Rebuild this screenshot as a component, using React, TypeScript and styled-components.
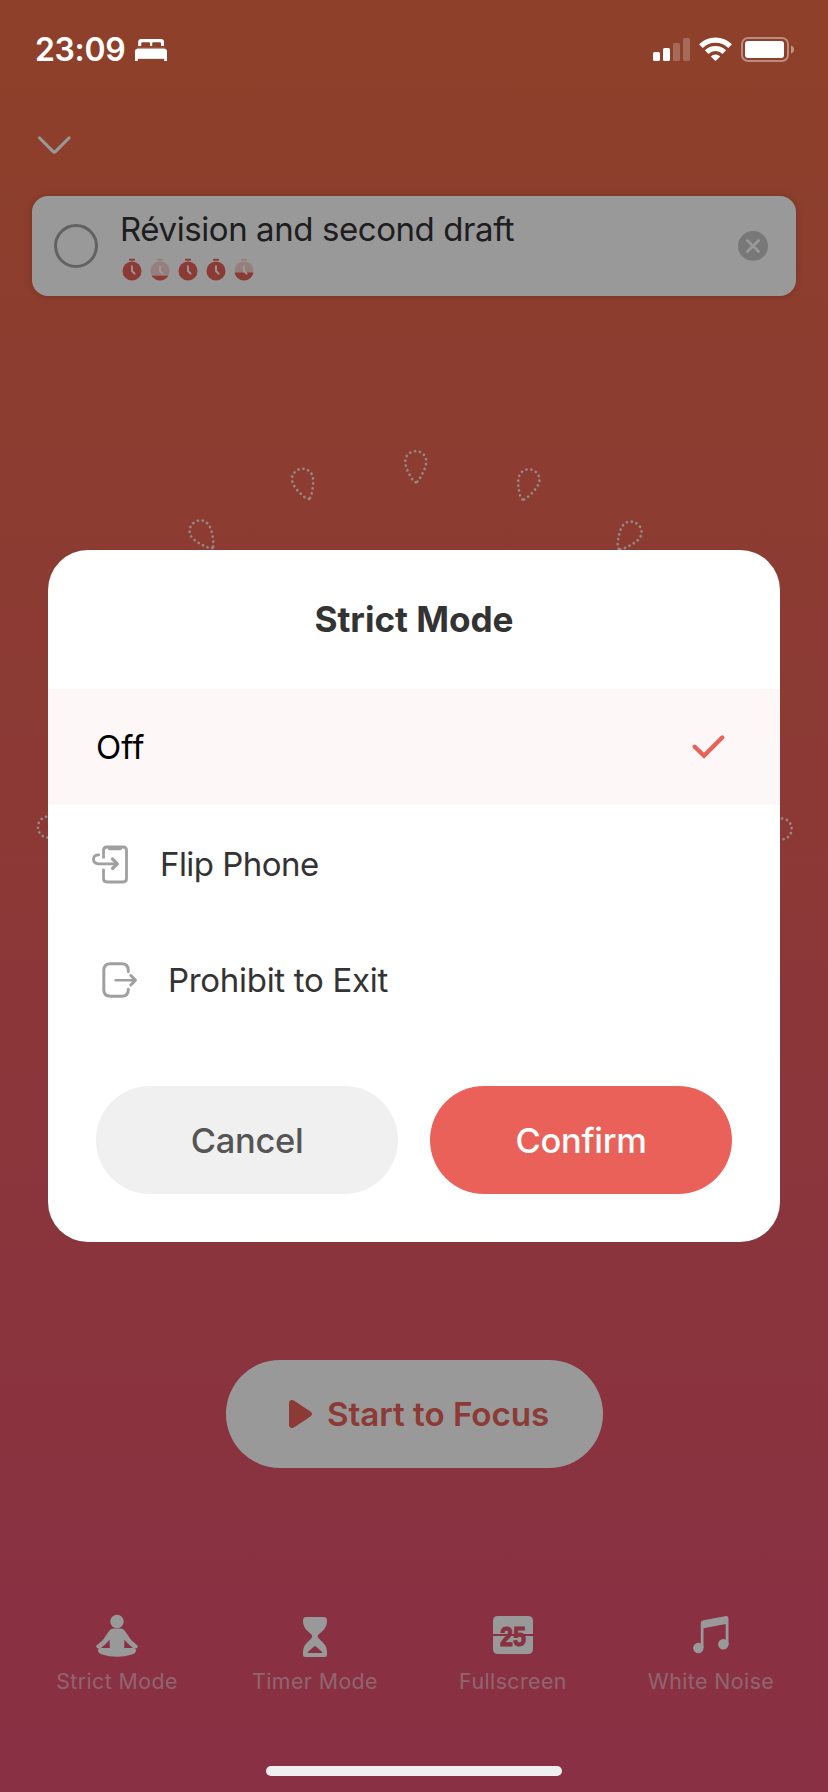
import React from 'react';
import styled, { createGlobalStyle } from 'styled-components';

const GlobalStyle = createGlobalStyle`
  *, *::before, *::after { box-sizing: border-box; }
  body { margin: 0; background: #8e412a; }
  svg { display: block; flex: none; }
  button { border: 0; padding: 0; margin: 0; font: inherit; }
`;

const Screen = styled.div`
  position: relative;
  display: flex;
  flex-direction: column;
  width: 828px;
  height: 1792px;
  overflow: hidden;
  font-family: Inter, Roboto, sans-serif;
  background: linear-gradient(180deg, #ed6c46 0%, #e45073 100%);
`;

/* Status bar and home indicator stay above the dimming layer. */
const StatusBar = styled.header`
  position: relative;
  z-index: 3;
  display: flex;
  align-items: center;
  height: 99px;
  padding: 0 34px 0 35px;
  color: #fff;
`;

const Time = styled.span`
  width: 100px;
  padding-top: 1px;
  font-size: 32px;
  font-weight: 600;
  line-height: 38px;
  letter-spacing: -0.35px;
  white-space: nowrap;
`;

const StatusRight = styled.div`
  display: flex;
  align-items: center;
  gap: 9px;
  margin-left: auto;
`;

const NavRow = styled.nav`
  display: flex;
  height: 97px;
  padding: 36px 0 0 36px;
`;

const TaskCard = styled.section`
  display: flex;
  align-items: center;
  height: 100px;
  margin: 0 32px;
  padding: 0 28px 0 22px;
  border-radius: 16px;
  background: #fff;
  box-shadow: 0 0 8px rgba(0, 0, 0, 0.18);
`;

const TaskRing = styled.span`
  width: 44px;
  height: 44px;
  border: 3px solid #a3a3a3;
  border-radius: 50%;
`;

const TaskBody = styled.div`
  flex: 1;
  display: flex;
  flex-direction: column;
  gap: 9px;
  margin-left: 22px;
  padding-bottom: 2px;
`;

const TaskTitle = styled.h1`
  margin: 0;
  color: #333;
  font-size: 33px;
  font-weight: 400;
  line-height: 40px;
  letter-spacing: -0.42px;
  white-space: nowrap;
`;

const TimerRow = styled.div`
  display: flex;
  gap: 8px;
  padding-left: 2px;
`;

const Dial = styled.svg`
  width: 828px;
  height: 776px;
  margin-top: 144px;
`;

const StartButton = styled.button`
  display: flex;
  align-items: center;
  gap: 14.5px;
  align-self: center;
  width: 377px;
  height: 108px;
  margin-top: 144px;
  padding-left: 63px;
  border-radius: 54px;
  background: #fff;
  color: #ea6159;
  font-size: 33.2px;
  font-weight: 600;
  letter-spacing: -0.05px;
  white-space: nowrap;
`;

const TabBar = styled.nav`
  display: grid;
  grid-template-columns: repeat(4, 198px);
  justify-content: center;
  margin-top: 144px;
`;

const Tab = styled.div`
  display: flex;
  flex-direction: column;
  align-items: center;
  gap: 10px;
`;

const TabLabel = styled.span`
  color: rgba(255, 255, 255, 0.5);
  font-size: 21.3px;
  font-weight: 400;
  line-height: 26px;
  letter-spacing: 0.45px;
  white-space: nowrap;
`;

const HomeIndicator = styled.div`
  position: relative;
  z-index: 3;
  align-self: center;
  width: 296px;
  height: 10px;
  margin: auto 0 16px;
  border-radius: 5px;
  background: #efefef;
`;

const Overlay = styled.div`
  position: absolute;
  inset: 0;
  z-index: 2;
  display: flex;
  align-items: center;
  justify-content: center;
  background: rgba(0, 0, 0, 0.4);
`;

const Dialog = styled.section`
  display: flex;
  flex-direction: column;
  width: 732px;
  height: 692px;
  border-radius: 40px;
  background: #fff;
  overflow: hidden;
`;

const DialogTitle = styled.h2`
  margin: 0;
  height: 139px;
  line-height: 139px;
  color: #333;
  font-size: 35.2px;
  font-weight: 700;
  text-align: center;
  letter-spacing: -0.05px;
`;

const Option = styled.div<{ $selected?: boolean; $indent: number; $gap?: number }>`
  display: flex;
  align-items: center;
  gap: ${(p) => p.$gap ?? 0}px;
  height: 116px;
  padding: ${(p) => (p.$selected ? 0 : 2)}px 55px 0 ${(p) => p.$indent}px;
  background: ${(p) => (p.$selected ? '#fdf7f7' : '#fff')};
  color: ${(p) => (p.$selected ? '#000' : '#333')};
`;

const OptionLabel = styled.span<{ $track?: number }>`
  flex: 1;
  font-size: 33px;
  line-height: 40px;
  letter-spacing: ${(p) => p.$track ?? 0}px;
  white-space: nowrap;
`;

const Actions = styled.div`
  display: grid;
  grid-template-columns: 1fr 1fr;
  gap: 32px;
  margin-top: auto;
  padding: 0 48px 48px;
`;

const ActionButton = styled.button<{ $primary?: boolean }>`
  height: 108px;
  border-radius: 54px;
  background: ${(p) => (p.$primary ? '#ea6159' : '#f0f0f0')};
  color: ${(p) => (p.$primary ? '#fff' : '#555')};
  font-size: 34.5px;
  font-weight: 500;
  letter-spacing: -0.3px;
`;

const BedIcon = () => (
  <svg width="32" height="22" viewBox="135 39 32 22" fill="#fff">
    <path d="M138.200 46V42Q138.200 39 141.200 39H161Q164 39 164 42V46H161V43.500Q161 42.300 159.800 42.300H153.300Q152.200 42.300 152.200 43.500V46H150V43.500Q150 42.300 148.900 42.300H142.400Q141.200 42.300 141.200 43.500V46Z" />
    <path d="M135 61V51.500Q135 48.800 137.700 48.800H164.300Q167 48.800 167 51.500V61H164.200V58.800H137.800V61Z" />
    <path d="M137 47.700H165V48.800H137ZM137.800 58H164.200V59H137.800Z" opacity=".4" />
  </svg>
);

const SignalIcon = () => (
  <svg width="37" height="25" viewBox="653 37 37 25" fill="#fff">
    <rect x="653" y="52" width="7" height="9" rx="1.600" />
    <rect x="663" y="48" width="7" height="13" rx="1.600" />
    <rect x="673" y="43" width="7" height="18" rx="1.600" opacity=".22" />
    <rect x="683" y="38" width="7" height="23" rx="1.600" opacity=".22" />
  </svg>
);

const WifiIcon = () => (
  <svg width="33" height="25" viewBox="-16.500 -24 33 25">
    <g fill="none" stroke="#fff" strokeWidth="5.200">
      <path d="M-14.600 -14.800A20.800 20.800 0 0 1 14.600 -14.800" />
      <path d="M-8.800 -8.900A12.500 12.500 0 0 1 8.800 -8.900" />
    </g>
    <path d="M-4.700 -4.500A6.500 6.500 0 0 1 4.700 -4.500L.6 -.4Q0 .1 -.6 -.4Z" fill="#fff" />
  </svg>
);

const BatteryIcon = () => (
  <svg width="53" height="25" viewBox="741 37 53 25">
    <rect x="742" y="38" width="46" height="23" rx="6" fill="none" stroke="#fff" strokeOpacity=".4" strokeWidth="2" />
    <rect x="745" y="41" width="39" height="17" rx="3" fill="#fff" />
    <path d="M791 45.500Q794 46.500 794 49.500T791 53.500Z" fill="#fff" opacity=".45" />
  </svg>
);

const ChevronDown = () => (
  <svg width="36" height="21" viewBox="0 0 36 21" fill="none" stroke="#fff" strokeWidth="3" strokeLinecap="round" strokeLinejoin="round">
    <path d="M3.400 2.800L17.200 16.600Q18.300 17.600 19.400 16.600L33.200 2.800" />
  </svg>
);

/* A stopwatch filled from the bottom up to `level` (0..1). */
const TimerIcon = ({ level, id }: { level: number; id: string }) => (
  <svg width="20" height="23" viewBox="0 0 20 23">
    <defs>
      <clipPath id={id}>
        <rect x="0" y={22.5 - 19 * level} width="20" height="22" />
      </clipPath>
    </defs>
    <g fill={level === 1 ? '#ea6159' : '#f8d2cf'}>
      <rect x="7" y=".7" width="6" height="2" rx=".6" />
      <circle cx="10" cy="13" r="9.500" />
    </g>
    {level < 1 && <circle cx="10" cy="13" r="9.500" fill="#ea6159" clipPath={`url(#${id})`} />}
    <path d="M10 8.200V13L12.600 15.700" fill="none" stroke="#fff" strokeWidth="1.900" strokeLinecap="round" strokeLinejoin="round" />
  </svg>
);

const ClearIcon = () => (
  <svg width="30" height="30" viewBox="0 0 30 30">
    <circle cx="15" cy="15" r="15" fill="#c8c8c8" />
    <path d="M9.400 9.400L20.600 20.600M20.600 9.400L9.400 20.600" stroke="#fff" strokeWidth="2.800" strokeLinecap="round" />
  </svg>
);

const PlayIcon = () => (
  <svg width="24" height="28" viewBox="0 0 24 28" fill="#ea6159">
    <path d="M0 3.400Q0 0 3 0Q4.300 0 5.300 .7L21 11.200Q23 12.500 23 14T21 16.800L5.300 27.300Q4.300 28 3 28Q0 28 0 24.600Z" />
  </svg>
);

const CheckIcon = () => (
  <svg width="33" height="24" viewBox="0 0 33 24" fill="none" stroke="#ea6159" strokeWidth="4.300" strokeLinecap="round" strokeLinejoin="miter">
    <path d="M2.700 11.800L12 20.800L30.200 2.500" />
  </svg>
);

const FlipIcon = () => (
  <svg width="37" height="39" viewBox="92 844.500 37 39" fill="none" stroke="#a0a0a0" strokeWidth="2.800" strokeLinecap="round" strokeLinejoin="round">
    <path d="M103.500 858V850Q103.500 846.500 107 846.500H123Q126.500 846.500 126.500 850V878Q126.500 881.500 123 881.500H107Q103.500 881.500 103.500 878V868.200" strokeLinecap="butt" />
    <path d="M107 847H122.500Q122 849.800 120 849.800H110Q107.800 849.800 107.300 847Z" fill="#a0a0a0" stroke="none" />
    <path d="M98.800 854.300C95.200 854.300 93.500 855.800 93.500 858.600C93.500 861.800 95 863.300 98.500 863.300H117" />
    <path d="M112.500 858.500L117.300 863.300L112.500 868" strokeWidth="3.200" />
  </svg>
);

const ExitIcon = () => (
  <svg width="36" height="37" viewBox="102 962 36 37" fill="none" stroke="#a0a0a0" strokeWidth="3" strokeLinecap="round" strokeLinejoin="round">
    <path d="M128.300 971.500V970.500Q128.300 963.800 121.500 963.800H110.500Q103.800 963.800 103.800 970.500V989.500Q103.800 996.200 110.500 996.200H121.500Q128.300 996.200 128.300 989.700V989.200" />
    <path d="M115.700 980.200H134.500" strokeWidth="2.600" />
    <path d="M130.800 975.500L135.500 980.200L130.800 985" />
  </svg>
);

const MeditateIcon = () => (
  <svg width="42" height="46" viewBox="96 1612 42 46" fill="#fff">
    <circle cx="117" cy="1621.500" r="6.700" />
    <path
      fillRule="evenodd"
      d="M113.500 1628.600H120.500Q123 1628.600 124.800 1630.800L130.600 1639.200Q132 1641 134 1642.500L137 1645Q138.300 1646.300 137.400 1647.500Q136.500 1648.700 134.900 1648.200Q136.300 1649.300 136 1651Q135.700 1653.200 132.500 1654.300Q125 1656.800 117 1656.800T101.500 1654.300Q98.300 1653.200 98 1651Q97.700 1649.300 99.100 1648.200Q97.500 1648.700 96.600 1647.500Q95.700 1646.300 97 1645L100 1642.500Q102 1641 103.400 1639.200L109.200 1630.800Q111 1628.600 113.500 1628.600Z
         M109.500 1639.500L108 1641.400Q106.500 1643.300 104.500 1645L101 1648H109.800Z
         M124.500 1639.500L126 1641.400Q127.500 1643.300 129.500 1645L133 1648H124.200Z"
    />
  </svg>
);

const HourglassIcon = () => (
  <svg width="24" height="46" viewBox="303 1612 24 46" fill="#fff">
    <path
      fillRule="evenodd"
      d="M306 1617H324Q327 1617 327 1620.500Q327 1627 322.500 1631L318.500 1634.600Q316.800 1636.500 318.800 1638.500L322.800 1642.500Q327 1646.500 327 1652V1654.500Q327 1657 324.500 1657H305.500Q303 1657 303 1654.500V1652Q303 1646.500 307.200 1642.500L311.200 1638.500Q313.200 1636.500 311.500 1634.600L307.500 1631Q303 1627 303 1620.500Q303 1617 306 1617Z
         M315 1646Q314.500 1646 313.500 1646.900L308 1651.700Q307 1652.800 308.300 1653H321.700Q323 1652.800 322 1651.700L316.500 1646.900Q315.500 1646 315 1646Z"
    />
  </svg>
);

const CounterIcon = () => (
  <svg width="40" height="46" viewBox="493 1612 40 46">
    <path d="M498 1616H528Q533 1616 533 1621V1634H493V1621Q493 1616 498 1616ZM493 1636H533V1649Q533 1654 528 1654H498Q493 1654 493 1649Z" fill="#fff" />
    <text
      transform="translate(513 1645.500) scale(.82 1)"
      textAnchor="middle"
      fontFamily="'Liberation Sans', Arial, sans-serif"
      fontWeight="700"
      fontSize="28.500"
      fill="#e5536d"
      stroke="#e5536d"
      strokeWidth="1.100"
    >
      25
    </text>
  </svg>
);

const MusicIcon = () => (
  <svg width="36" height="46" viewBox="691.500 1612 36 46" fill="#fff">
    <path d="M699.300 1645V1623.500Q699.300 1620.800 702 1620.300L723.500 1616.200Q727 1615.600 727 1619V1645H724.200V1624L702 1628.300V1648H699.300Z" />
    <circle cx="696.900" cy="1648" r="5.200" />
    <circle cx="721.800" cy="1644.300" r="5.200" />
  </svg>
);

const petalAngles = Array.from({ length: 20 }, (_, i) => i * 18);

const PetalDial = () => (
  <Dial viewBox="0 440 828 776">
    {petalAngles.map((a) => (
      <path
        key={a}
        transform={`translate(414.800 828) rotate(${a + 0.15})`}
        d="M0 -345.700C-1.600 -345.900 -2.400 -347 -3.300 -348.300C-7 -354.300 -10.500 -361.500 -10.500 -366.300C-10.500 -372.600 -6 -376.800 0 -376.800S10.500 -372.600 10.500 -366.300C10.500 -361.500 7 -354.300 3.300 -348.300C2.400 -347 1.600 -345.900 0 -345.700Z"
        fill="none"
        stroke="#fff"
        strokeOpacity=".8"
        strokeWidth="2.700"
        strokeLinecap="round"
        strokeDasharray="0.100 4.850"
      />
    ))}
  </Dial>
);

const timers = [1, 0.25, 1, 1, 0.42];

const tabs = [
  { label: 'Strict Mode', icon: <MeditateIcon /> },
  { label: 'Timer Mode', icon: <HourglassIcon /> },
  { label: 'Fullscreen', icon: <CounterIcon /> },
  { label: 'White Noise', icon: <MusicIcon /> },
];

export default function App() {
  return (
    <>
      <GlobalStyle />
      <Screen>
        <StatusBar>
          <Time>23:09</Time>
          <BedIcon />
          <StatusRight>
            <SignalIcon />
            <WifiIcon />
            <BatteryIcon />
          </StatusRight>
        </StatusBar>
        <NavRow>
          <ChevronDown />
        </NavRow>
        <TaskCard>
          <TaskRing />
          <TaskBody>
            <TaskTitle>Révision and second draft</TaskTitle>
            <TimerRow>
              {timers.map((level, i) => (
                <TimerIcon key={i} id={`timer-${i}`} level={level} />
              ))}
            </TimerRow>
          </TaskBody>
          <ClearIcon />
        </TaskCard>
        <PetalDial />
        <StartButton>
          <PlayIcon />
          Start to Focus
        </StartButton>
        <TabBar>
          {tabs.map((t) => (
            <Tab key={t.label}>
              {t.icon}
              <TabLabel>{t.label}</TabLabel>
            </Tab>
          ))}
        </TabBar>
        <HomeIndicator />
        <Overlay>
          <Dialog role="dialog">
            <DialogTitle>Strict Mode</DialogTitle>
            <Option $selected $indent={48}>
              <OptionLabel>Off</OptionLabel>
              <CheckIcon />
            </Option>
            <Option $indent={44} $gap={31}>
              <FlipIcon />
              <OptionLabel $track={-0.55}>Flip Phone</OptionLabel>
            </Option>
            <Option $indent={54} $gap={30}>
              <ExitIcon />
              <OptionLabel $track={-0.3}>Prohibit to Exit</OptionLabel>
            </Option>
            <Actions>
              <ActionButton>Cancel</ActionButton>
              <ActionButton $primary>Confirm</ActionButton>
            </Actions>
          </Dialog>
        </Overlay>
      </Screen>
    </>
  );
}
